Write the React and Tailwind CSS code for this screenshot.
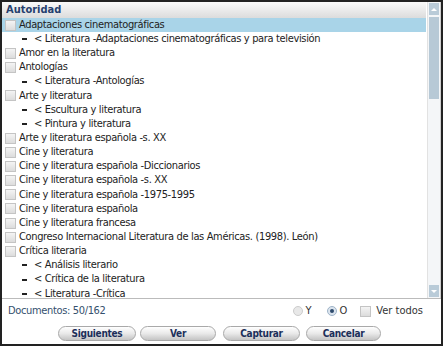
import React from "react";

const rows = [
  { t: "Adaptaciones cinematográficas", sel: true },
  { t: "< Literatura -Adaptaciones cinematográficas y para televisión", sub: true },
  { t: "Amor en la literatura" },
  { t: "Antologías" },
  { t: "< Literatura -Antologías", sub: true },
  { t: "Arte y literatura" },
  { t: "< Escultura y literatura", sub: true },
  { t: "< Pintura y literatura", sub: true },
  { t: "Arte y literatura española -s. XX" },
  { t: "Cine y literatura" },
  { t: "Cine y literatura española -Diccionarios" },
  { t: "Cine y literatura española -s. XX" },
  { t: "Cine y literatura española -1975-1995" },
  { t: "Cine y literatura española" },
  { t: "Cine y literatura francesa" },
  { t: "Congreso Internacional Literatura de las Américas. (1998). León)" },
  { t: "Crítica literaria" },
  { t: "< Análisis literario", sub: true },
  { t: "< Crítica de la literatura", sub: true },
  { t: "< Literatura -Crítica", sub: true },
];

const Box = () => (
  <span className="inline-block w-[11px] h-[11px] border border-[#c4c4c4] bg-gradient-to-b from-[#f4f4f4] to-[#dcdcdc] shrink-0" />
);

const Btn = ({ label, w }) => (
  <button
    className={`${w} h-[15px] rounded-full border border-[#a9a9a9] bg-gradient-to-b from-[#ffffff] via-[#e9e9e9] to-[#c4c4c4] text-[10px] font-bold text-[#1c2f5a] leading-none tracking-[-0.3px]`}
  >
    {label}
  </button>
);

export default function App() {
  return (
    <div className="w-[443px] h-[346px] border-2 border-[#222] bg-white flex flex-col text-[#222] text-[11px] tracking-[-0.35px] font-['DejaVu_Sans_Condensed','DejaVu_Sans',sans-serif] overflow-hidden">
      <div className="flex h-[297px] border-b border-[#bbb]">
        <div className="flex-1 flex flex-col overflow-hidden">
          <div className="h-[16px] shrink-0 pl-[4px] bg-gradient-to-b from-[#fafafa] to-[#dcdcdc] font-bold text-[#26406e] leading-[16px] tracking-normal">
            Autoridad
          </div>
          {rows.map((r, i) =>
            r.sub ? (
              <div key={i} className="h-[14.15px] shrink-0 flex items-center pl-[20px] gap-[7px] whitespace-nowrap">
                <span className="w-[5px] h-[2px] bg-[#222]" />
                <span>{r.t}</span>
              </div>
            ) : (
              <div
                key={i}
                className={`h-[14.15px] shrink-0 flex items-center pl-[3px] gap-[3px] whitespace-nowrap ${r.sel ? "bg-[#a9d4e8]" : ""}`}
              >
                <Box />
                <span>{r.t}</span>
              </div>
            )
          )}
        </div>
        <div className="w-[14px] ml-[1px] flex flex-col border-l border-[#e2e2e2] border-r border-r-[#cfcfcf] bg-[#f4f6f8] py-[1px]">
          <div className="h-[12px] mx-[1px] bg-[#b9cbd8] flex items-center justify-center">
            <span className="w-0 h-0 border-x-[3px] border-x-transparent border-b-[3px] border-b-white" />
          </div>
          <div className="h-[82px] mx-[1px] mt-[2px] bg-[#b7c9d6]" />
          <div className="flex-1" />
          <div className="h-[12px] mx-[1px] bg-[#b9cbd8] flex items-center justify-center">
            <span className="w-0 h-0 border-x-[3px] border-x-transparent border-t-[3px] border-t-white" />
          </div>
        </div>
      </div>
      <div className="flex items-center h-[24px] pl-[6px] pr-[18px]">
        <span className="text-[#34506e]">Documentos: 50/162</span>
        <div className="ml-auto flex items-center gap-[3px] text-[#333] tracking-normal">
          <span className="w-[10px] h-[10px] rounded-full border border-[#ccc] bg-[#e8e8e8]" />
          <span>Y</span>
          <span className="ml-[12px] w-[10px] h-[10px] rounded-full border border-[#9fb4c8] bg-[#dbe4ee] flex items-center justify-center">
            <span className="w-[4px] h-[4px] rounded-full bg-[#2d4a6c]" />
          </span>
          <span>O</span>
          <span className="ml-[10px] flex"><Box /></span>
          <span className="ml-[2px]">Ver todos</span>
        </div>
      </div>
      <div className="flex pl-[56px] pt-[3px]">
        <Btn label="Siguientes" w="w-[78px]" />
        <span className="w-[4px]" />
        <Btn label="Ver" w="w-[76px]" />
        <span className="w-[7px]" />
        <Btn label="Capturar" w="w-[77px]" />
        <span className="w-[6px]" />
        <Btn label="Cancelar" w="w-[75px]" />
      </div>
    </div>
  );
}
